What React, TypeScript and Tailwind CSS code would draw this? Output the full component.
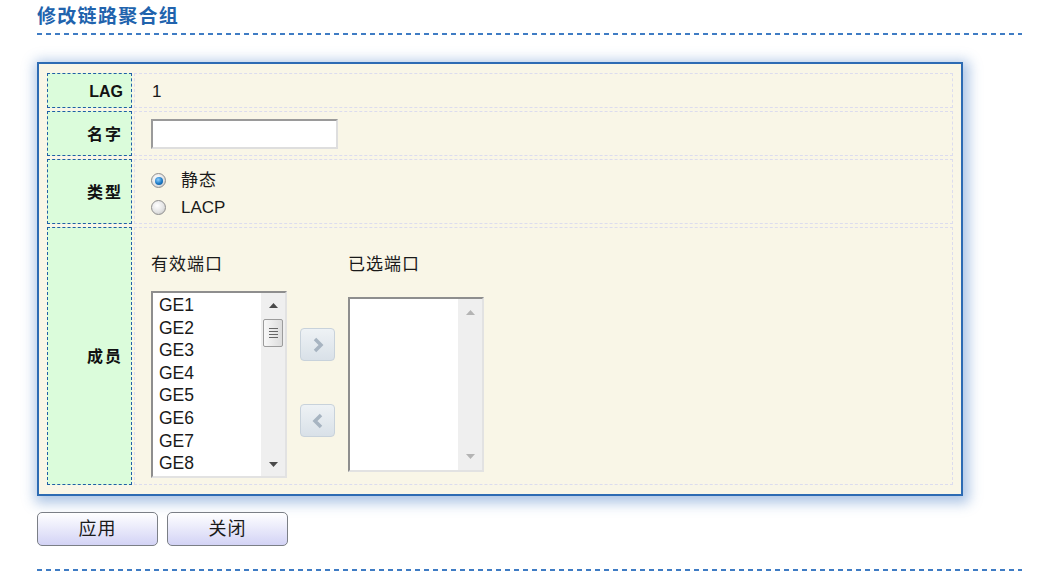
import React from 'react';

const ports = ['GE1', 'GE2', 'GE3', 'GE4', 'GE5', 'GE6', 'GE7', 'GE8'];

const Dashed: React.FC<{ className?: string }> = ({ className }) => (
  <div
    className={
      'h-[2px] bg-[repeating-linear-gradient(90deg,#3f7cc4_0_5px,transparent_5px_9px)] ' + (className ?? '')
    }
  />
);

const Arrow: React.FC<{ up?: boolean; dim?: boolean }> = ({ up, dim }) => (
  <svg width="9" height="5" viewBox="0 0 9 5">
    <path d={up ? 'M0 5L4.5 0L9 5Z' : 'M0 0L4.5 5L9 0Z'} fill={dim ? '#b4b4b4' : '#4a4a4a'} />
  </svg>
);

const Radio: React.FC<{ checked?: boolean }> = ({ checked }) => (
  <span className="flex h-[15px] w-[15px] items-center justify-center rounded-full border border-[#8f8f8f] bg-[radial-gradient(circle_at_40%_35%,#ffffff_0%,#e4e4e4_55%,#bdbdbd_100%)]">
    {checked && (
      <span className="h-[8px] w-[8px] rounded-full bg-[radial-gradient(circle_at_40%_35%,#8fd0ff_0%,#1c79c4_55%,#0c4c8c_100%)]" />
    )}
  </span>
);

const MoveButton: React.FC<{ dir: 'right' | 'left' }> = ({ dir }) => (
  <button className="flex h-[33px] w-[35px] items-center justify-center rounded-[4px] border border-[#c8d2db] bg-linear-to-b from-[#eef2f5] to-[#d9e1e8]">
    <svg width="14" height="16" viewBox="0 0 14 16">
      <path
        d={dir === 'right' ? 'M4 2l6 6-6 6' : 'M10 2l-6 6 6 6'}
        fill="none"
        stroke="#a7b4c1"
        strokeWidth="3.5"
        strokeLinejoin="miter"
      />
    </svg>
  </button>
);

const Label: React.FC<{ children: React.ReactNode }> = ({ children }) => (
  <div className="flex items-center justify-end border border-dashed border-[#1f5ea6] bg-[#dbfcdb] pr-[8px] pt-[2px] text-[16px] font-bold text-[#111]">
    {children}
  </div>
);

const App: React.FC = () => {
  return (
    <div className="min-h-[588px] w-[1058px] bg-white pl-[37px] pr-[36px] pt-[5px] font-['Liberation_Sans','Noto_Sans_CJK_SC',sans-serif] text-[#1a1a1a]">
      {/* Title */}
      <h2 className="text-[19px] leading-[24px] font-bold tracking-[1.3px] text-[#2163ad]">修改链路聚合组</h2>
      <Dashed className="mt-[4px]" />

      {/* Panel */}
      <div className="mt-[27px] w-[926px] border-2 border-[#2d6bb3] bg-[#f9f6e7] px-[8px] pt-[9px] pb-[9px] shadow-[2px_3px_12px_4px_rgba(50,110,190,0.4)]">
        <div className="grid grid-cols-[85px_1fr] grid-rows-[35px_45px_65px_258px] gap-x-[2px] gap-y-[3px]">
          <Label>LAG</Label>
          <div className="flex items-center border border-dashed border-[#dcdcee] pl-[17px] pt-[2px] text-[17px]">1</div>

          <Label>
            <span className="tracking-[2px]">名字</span>
          </Label>
          <div className="flex items-center border border-dashed border-[#dcdcee] pl-[16px]">
            <input
              type="text"
              className="h-[30px] w-[187px] border-2 border-t-[#9a9a9a] border-l-[#9a9a9a] border-r-[#dedede] border-b-[#dedede] bg-white outline-none"
            />
          </div>

          <Label>
            <span className="tracking-[2px]">类型</span>
          </Label>
          <div className="flex flex-col justify-center border border-dashed border-[#dcdcee] pl-[16px] pt-[5px] text-[17px]">
            <label className="flex h-[27px] items-center gap-[15px]">
              <Radio checked />
              <span className="tracking-[1px]">静态</span>
            </label>
            <label className="flex h-[27px] items-center gap-[15px]">
              <Radio />
              <span>LACP</span>
            </label>
          </div>

          <Label>
            <span className="tracking-[2px]">成员</span>
          </Label>
          <div className="flex items-start border border-dashed border-[#dcdcee] pl-[16px] pt-[27px] text-[17px]">
            {/* Available */}
            <div className="flex flex-col">
              <div className="h-[20px] leading-[20px] tracking-[1px]">有效端口</div>
              <div className="mt-[16px] flex h-[187px] w-[136px] border-2 border-t-[#8e8e8e] border-l-[#8e8e8e] border-r-[#e2e2e2] border-b-[#e2e2e2] bg-white">
                <div className="flex-1 overflow-hidden pl-[6px] pt-[1px] text-[17.5px] leading-[22.6px]">
                  {ports.map((p) => (
                    <div key={p}>{p}</div>
                  ))}
                </div>
                <div className="flex w-[24px] flex-col items-center bg-[#efefef] pt-[10px] pb-[9px]">
                  <Arrow up />
                  <div className="mt-[11px] flex h-[28px] w-[20px] flex-col items-center justify-center gap-[2px] rounded-[2px] border border-[#9c9c9c] bg-linear-to-r from-[#f8f8f8] to-[#dcdcdc]">
                    <span className="h-px w-[9px] bg-[#666]" />
                    <span className="h-px w-[9px] bg-[#666]" />
                    <span className="h-px w-[9px] bg-[#666]" />
                    <span className="h-px w-[9px] bg-[#666]" />
                  </div>
                  <div className="flex-1" />
                  <Arrow />
                </div>
              </div>
            </div>

            {/* Move buttons */}
            <div className="ml-[13px] mt-[73px] flex flex-col gap-[43px]">
              <MoveButton dir="right" />
              <MoveButton dir="left" />
            </div>

            {/* Selected */}
            <div className="ml-[13px] flex flex-col">
              <div className="h-[20px] leading-[20px] tracking-[1px]">已选端口</div>
              <div className="mt-[22px] flex h-[175px] w-[136px] border-2 border-t-[#8e8e8e] border-l-[#8e8e8e] border-r-[#e2e2e2] border-b-[#e2e2e2] bg-white">
                <div className="flex-1" />
                <div className="flex w-[24px] flex-col items-center bg-[#efefef] pt-[11px] pb-[11px]">
                  <Arrow up dim />
                  <div className="flex-1" />
                  <Arrow dim />
                </div>
              </div>
            </div>
          </div>
        </div>
      </div>

      {/* Actions */}
      <div className="mt-[16px] flex gap-[9px]">
        <button className="h-[34px] w-[121px] rounded-[5px] border border-[#7b7f86] bg-linear-to-b from-white to-[#d3d3f5] text-[18px] tracking-[1px] text-[#1a1a1a]">
          应用
        </button>
        <button className="h-[34px] w-[121px] rounded-[5px] border border-[#7b7f86] bg-linear-to-b from-white to-[#d3d3f5] text-[18px] tracking-[1px] text-[#1a1a1a]">
          关闭
        </button>
      </div>

      <Dashed className="mt-[23px]" />
    </div>
  );
};

export default App;
